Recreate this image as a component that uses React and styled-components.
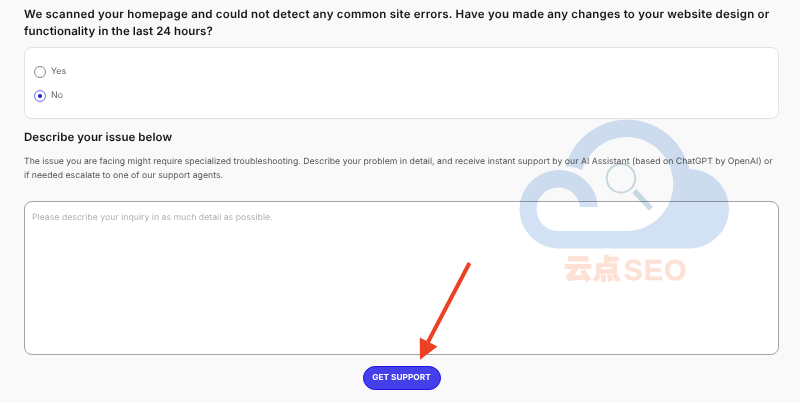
import React, { useState } from 'react';
import styled, { createGlobalStyle } from 'styled-components';

const GlobalStyle = createGlobalStyle`
  body {
    margin: 0;
    background: #f9f9f9;
    overflow: hidden;
    text-rendering: geometricPrecision;
  }
  * {
    box-sizing: border-box;
  }
`;

const Page = styled.main`
  position: relative;
  height: 403px;
  padding: 6px 21px 0 24px;
  display: flex;
  flex-direction: column;
  font-family: 'Inter', sans-serif;
`;

const Question = styled.h2`
  margin: 0;
  font-size: 11.5px;
  font-weight: 600;
  line-height: 17px;
  color: #161616;
  white-space: nowrap;
`;

const Line = styled.span`
  display: block;
  letter-spacing: ${props => props.$spacing};
`;

const Options = styled.div`
  height: 72px;
  margin-top: 7px;
  padding: 11px 9px;
  display: flex;
  flex-direction: column;
  background: #ffffff;
  border: 1px solid #e2e2e2;
  border-radius: 8px;
`;

const Option = styled.label`
  height: 25px;
  padding-top: 1px;
  display: flex;
  align-items: center;
  gap: 5px;
  font-size: 8.8px;
  color: #5c5c5c;
`;

const Radio = styled.input`
  appearance: none;
  width: 12px;
  height: 12px;
  margin: 0;
  border: 1px solid #8a8a8a;
  border-radius: 50%;
  background: #ffffff;
  &:checked {
    border-color: #6d6df0;
    background: radial-gradient(circle, #1717d8 1.5px, #ffffff 2.2px);
  }
`;

const Describe = styled(Question)`
  margin-top: 10px;
`;

const Help = styled.p`
  margin: 9px 0 0;
  font-size: 8.7px;
  line-height: 14px;
  color: #555555;
  white-space: nowrap;
`;

const Inquiry = styled.textarea`
  display: block;
  width: 100%;
  height: 154px;
  margin: 18px 0 0;
  padding: 9px 7px 7px;
  border: 1px solid #a3a3a3;
  border-radius: 8px;
  background: #ffffff;
  outline: none;
  resize: none;
  font-family: 'Inter', sans-serif;
  font-size: 8.7px;
  line-height: 14px;
  letter-spacing: 0.015px;
  text-rendering: geometricPrecision;
  color: #555555;
  &::placeholder {
    color: #b0b0b0;
    opacity: 1;
  }
`;

const Button = styled.button`
  align-self: center;
  width: 78px;
  height: 24px;
  margin: 11px 0 0;
  padding: 0;
  border: 1px solid #1d10e6;
  border-radius: 12px;
  background: #4340e9;
  color: #ffffff;
  font-family: 'Inter', sans-serif;
  font-size: 8.3px;
  font-weight: 700;
  text-rendering: geometricPrecision;
  white-space: nowrap;
  cursor: pointer;
`;

const Overlay = styled.svg`
  position: absolute;
  top: 0;
  left: 0;
  pointer-events: none;
`;

const Watermark = styled(Overlay)`
  mix-blend-mode: multiply;
`;

const Cloud = () => (
  <Watermark width="800" height="403" viewBox="0 0 800 403">
    <path
      fill="#d2e1f4"
      d="M565.5 166A64.5 64.5 0 0 1 626 119.5A64.5 64.5 0 0 1 689.3 169A39.75 39.75 0 0 1 689.3 248.5H558.7A39.3 39.3 0 1 1 598 207H580A21.8 21.8 0 1 0 558.5 231H626A47.2 47.2 0 0 0 673.3 184A47.2 47.2 0 0 0 626 137A47.2 47.2 0 0 0 582 170Q574 166.5 565.5 166Z"
    />
    <circle cx="621" cy="178.3" r="14.3" fill="none" stroke="#cadde5" strokeWidth="2" />
    <path d="M634.3 191L651 208.8" stroke="#cadde5" strokeWidth="5.5" />
    <g fill="#fee1d6">
      <text
        x="564 592.5"
        y="278.8"
        fontFamily="'Noto Sans CJK SC', sans-serif"
        fontSize="28"
        fontWeight="900"
        stroke="#fee1d6"
        strokeWidth="0.8"
      >
        云点
      </text>
      <text
        x="623.5"
        y="279.5"
        fontFamily="'Liberation Sans', sans-serif"
        fontSize="29"
        fontWeight="700"
        textLength="63"
        stroke="#fee1d6"
        strokeWidth="0.4"
      >
        SEO
      </text>
    </g>
  </Watermark>
);

const Arrow = () => (
  <Overlay width="800" height="403" viewBox="0 0 800 403">
    <path d="M469.5 263L428 342" stroke="#ed4124" strokeWidth="4" />
    <path d="M419.7 337.5L437.5 346.5L420 359.7Z" fill="#ed4124" />
  </Overlay>
);

export default function App() {
  const [changed, setChanged] = useState('no');
  const [inquiry, setInquiry] = useState('');

  return (
    <Page>
      <GlobalStyle />
      <Question>
        <Line $spacing="0.224px">
          We scanned your homepage and could not detect any common site errors. Have you made any changes to your
          website design or
        </Line>
        <Line $spacing="0.1px">functionality in the last 24 hours?</Line>
      </Question>
      <Options>
        <Option>
          <Radio type="radio" name="changed" checked={changed === 'yes'} onChange={() => setChanged('yes')} />
          Yes
        </Option>
        <Option>
          <Radio type="radio" name="changed" checked={changed === 'no'} onChange={() => setChanged('no')} />
          No
        </Option>
      </Options>
      <Describe>
        <Line $spacing="0.06px">Describe your issue below</Line>
      </Describe>
      <Help>
        <Line $spacing="0.02px">
          The issue you are facing might require specialized troubleshooting. Describe your problem in detail, and
          receive instant support by our AI Assistant (based on ChatGPT by OpenAI) or
        </Line>
        <Line $spacing="0.03px">if needed escalate to one of our support agents.</Line>
      </Help>
      <Inquiry
        value={inquiry}
        onChange={evt => setInquiry(evt.target.value)}
        placeholder="Please describe your inquiry in as much detail as possible."
      />
      <Button>GET SUPPORT</Button>
      <Cloud />
      <Arrow />
    </Page>
  );
}
